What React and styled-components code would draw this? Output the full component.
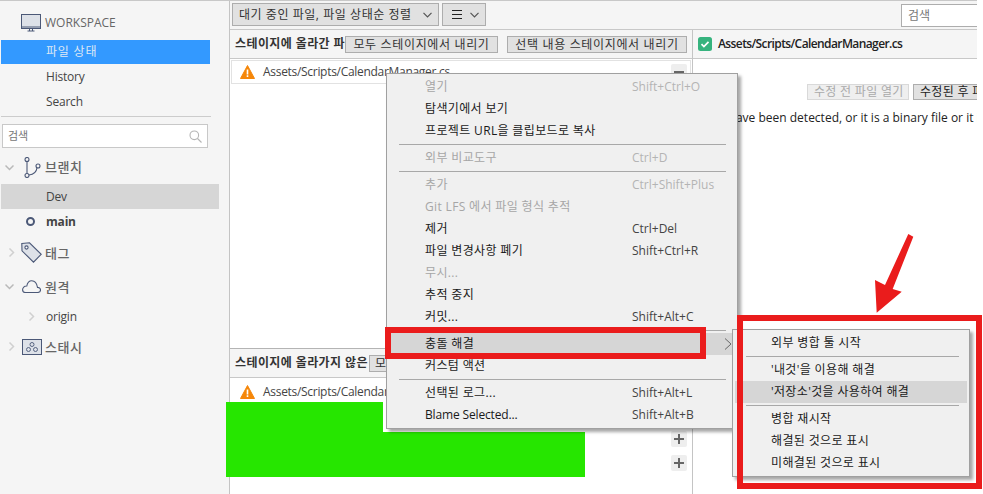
import React from 'react';
import styled, { createGlobalStyle } from 'styled-components';

const Global = createGlobalStyle`
  html, body { margin: 0; padding: 0; background: #fff; overflow: hidden; }
  * { box-sizing: border-box; }
  #root { width: 983px; height: 494px; }
`;
const FONT = `"Open Sans", "Noto Sans CJK KR", sans-serif`;

const Page = styled.div`
  position: relative; width: 983px; height: 494px; overflow: hidden;
  font: 12px/16px ${FONT}; color: #222; background: #fff;
`;
const Window = styled.div`
  display: flex; width: 977px; height: 494px; border-top: 1px solid #c8c8c8;
`;
const Sidebar = styled.aside`
  width: 230px; flex: none; background: #f5f5f5; border-right: 1px solid #c4c4c4;
  padding: 9px 0 0 1px; display: flex; flex-direction: column;
`;
const GroupHead = styled.div`
  display: flex; align-items: center; height: ${p => p.$h || 25}px;
  margin-top: ${p => p.$mt || 0}px; margin-bottom: ${p => p.$mb || 0}px;
  font-size: ${p => p.$size || 13}px; font-weight: 500; color: #666; gap: ${p => p.$gap || 3}px;
  padding-left: ${p => p.$pl || 3}px; letter-spacing: ${p => p.$ls ?? .6}px;
`;
const Chevron = styled.span`
  width: 14px; flex: none; display: flex; justify-content: flex-start; padding-left: ${p => p.$open ? 1 : 3}px;
`;
const IconSlot = styled.span`
  width: 21px; flex: none; display: flex; justify-content: center; align-items: center;
`;
const NavItem = styled.div`
  height: ${p => p.$h || 25}px; width: ${p => p.$w || 209}px; padding-left: 45px;
  display: flex; align-items: center; font-size: 12px; color: #444; letter-spacing: ${p => p.$ls ?? -.2}px;
  font-weight: ${p => p.$bold ? 700 : 400};
  background: ${p => p.$bg || 'transparent'}; ${p => p.$fg ? `color:${p.$fg};` : ''}
  position: relative;
`;
const NavChevron = styled.span`
  position: absolute; left: 26px; top: 9px; display: flex;
`;
const CurrentDot = styled.span`
  position: absolute; left: 25px; top: 8px; width: 9px; height: 9px; border-radius: 50%;
  border: 2px solid #4b5877;
`;
const Rule = styled.div`
  width: 210px; height: 1px; background: #ccc; margin: 2px 0 7px;
`;
const SideSearch = styled.div`
  width: 206px; height: 24px; margin-left: 1px; background: #fff; border: 1px solid #c8c8c8;
  display: flex; align-items: center; justify-content: space-between; padding: 0 5px 0 5px; color: #777; font-size: 11px;
`;
const Main = styled.main`
  flex: 1; min-width: 0; display: flex; flex-direction: column;
`;
const Toolbar = styled.div`
  height: 29px; flex: none; background: #f5f5f5; border-bottom: 1px solid #c8c8c8;
  display: flex; align-items: flex-start; padding: 2px 0 0 2px; gap: 3px;
`;
const ToolButton = styled.div`
  height: 23px; width: ${p => p.$w}px; flex: none; background: #e1e1e1; border: 1px solid #adadad;
  display: flex; align-items: center; justify-content: space-between; padding: 0 6px 0 ${p => p.$pl || 6}px; color: #333; font-size: 12px; letter-spacing: .55px; white-space: nowrap;
`;
const TopSearch = styled.div`
  margin-left: auto; margin-top: 1px; width: 76px; height: 23px; background: #fff; border: 1px solid #adadad; border-right: 0;
  padding: 0 6px; font-size: 12px; color: #777; display:flex; align-items:center;
`;
const Panes = styled.div`
  flex: 1; min-height: 0; display: flex;
`;
const LeftPane = styled.div`
  width: 463px; flex: none; border-right: 1px solid #c4c4c4; display: flex; flex-direction: column;
`;
const StageBox = styled.section`
  height: ${p => p.$h}px; flex: none; display: flex; flex-direction: column;
  ${p => p.$line ? 'border-top: 1px solid #b4b4b4;' : ''}
`;
const PaneHead = styled.div`
  height: ${p => p.$h || 29}px; flex: none; background: #f5f5f5; border-bottom: 1px solid #c8c8c8; display: flex; align-items: center;
  padding-left: 5px; position: relative; white-space: nowrap; overflow: hidden;
  font-size: 12px; font-weight: 700; color: #333; letter-spacing: .4px;
`;
const HeadPath = styled.span`
  margin-left: 6px; font-weight: 600; letter-spacing: -.6px; color: #222;
`;
const StageButton = styled.div`
  position: absolute; left: ${p => p.$x}px; top: 6px; height: 17px; width: ${p => p.$w}px;
  background: #e1e1e1; border: 1px solid #adadad; font-weight: 400; font-size: 12px; letter-spacing: .65px;
  display: flex; align-items: center; justify-content: ${p => p.$left ? 'flex-start' : 'center'}; padding-left: ${p => p.$left ? 5 : 0}px;
  color: #333; white-space: nowrap; overflow: hidden;
`;
const FileRow = styled.div`
  height: ${p => p.$h || 24}px; margin: 1px 1px 0 1px; flex: none;
  border: 1px solid ${p => p.$border ? '#e2e2e2' : 'transparent'};
  display: flex; align-items: center; gap: 8px; padding-left: 8px; color: #444; position: relative; font-size: 12px; letter-spacing: -.3px;
`;
const MiniButton = styled.div`
  position: absolute; right: 3px; width: 16px; height: 16px; border-radius: 2px; background: #eee;
  display: flex; align-items: center; justify-content: center; top: ${p => p.$top || 3}px;
`;
const PlusList = styled.div`
  display: flex; flex-direction: column; align-items: flex-end; gap: 8px; padding: 0 5px 0 0; margin-top: 26px;
`;
const PlusButton = styled.div`
  width: 16px; height: 16px; border-radius: 2px; background: #eee; display: flex; align-items: center; justify-content: center;
`;
const RightPane = styled.div`
  flex: 1; min-width: 0; display: flex; flex-direction: column; overflow: hidden;
`;
const DiffActions = styled.div`
  display: flex; gap: 4px; padding: 25px 0 0 114px; white-space: nowrap;
`;
const DiffButton = styled.div`
  height: 16px; flex: none; width: ${p => p.$w}px; padding-left: 6px; overflow: hidden;
  background: ${p => p.$off ? '#efefef' : '#e1e1e1'}; border: 1px solid ${p => p.$off ? '#d9d9d9' : '#adadad'};
  color: ${p => p.$off ? '#aaa' : '#222'}; display: flex; align-items: center; letter-spacing: .3px; font-size: 12px;
`;
const DiffMessage = styled.div`
  margin: 10px 0 0 -33px; font-weight: 500; color: #222; white-space: nowrap; font-size: 12px; letter-spacing: 0;
`;
const Menu = styled.div`
  position: absolute; left: ${p => p.$x}px; top: ${p => p.$y}px; width: ${p => p.$w}px;
  background: #f0f0f0; border: 1px solid #a0a0a0; padding: 2px; box-shadow: 3px 3px 3px rgba(0,0,0,.35);
  display: flex; flex-direction: column; z-index: ${p => p.$z};
`;
const MenuItem = styled.div`
  height: 22px; flex: none; display: flex; align-items: center; justify-content: space-between; position: relative;
  padding: 0 ${p => p.$pr || 4}px 0 ${p => p.$pl || 36}px;
  color: ${p => p.$off ? '#a6a6a6' : '#1a1a1a'}; background: ${p => p.$hi ? '#d6d6d6' : 'transparent'};
  letter-spacing: ${p => p.$latin ? -.15 : .35}px; font-size: 12px; white-space: nowrap;
`;
const Shortcut = styled.span`
  width: 99px; flex: none; letter-spacing: 0; color: ${p => p.$off ? '#b4b4b4' : '#444'};
`;
const MenuSep = styled.div`
  height: 1px; margin: 2px ${p => p.$r || 9}px 2px ${p => p.$l || 10}px; flex: none; background: #a8a8a8;
`;
const SubArrow = styled.svg`
  position: absolute; right: 3px; top: 5px;
`;
const Redact = styled.div`
  position: absolute; left: 226px; top: 402px; width: 359px; height: 75px; z-index: 1; background: #26e600;
  clip-path: polygon(0 0, 157px 0, 157px 30px, 100% 30px, 100% 100%, 0 100%);
`;
const RedFrame = styled.div`
  position: absolute; left: ${p => p.$x}px; top: ${p => p.$y}px; width: ${p => p.$w}px; height: ${p => p.$h}px;
  border: ${p => p.$b || 6}px solid #ea1c1c; z-index: 5; pointer-events: none;
`;
const ArrowDrawing = styled.svg`
  position: absolute; left: 870px; top: 230px; z-index: 5;
`;

const I = { s: '#4b5877', f: '#dde1e8' };
const Monitor = () => (
  <svg width="20" height="18" viewBox="0 0 20 18" fill="none" stroke={I.s}>
    <rect x=".5" y=".5" width="19" height="14" fill={I.f} />
    <path d="M.5 13h19M6.500 17h7M8.500 15v2M11.500 15v2" />
  </svg>
);
const Branch = () => (
  <svg width="18" height="21" viewBox="0 0 18 21" fill="none" stroke={I.s} strokeWidth="1.100">
    <circle cx="4" cy="2.500" r="2" /><circle cx="4" cy="18.500" r="2" /><circle cx="15" cy="9" r="2" />
    <path d="M4 4.500v12M6 18c4.500-.5 7.500-3 8-7.200" />
  </svg>
);
const Tag = () => (
  <svg width="21" height="21" viewBox="0 0 21 21" stroke={I.s} strokeWidth="1.100">
    <path d="M.8 1.500l7.700-.7 11.700 11.500-7.700 7.900L1 8.800z" fill={I.f} />
    <circle cx="5.500" cy="5.500" r="1.600" fill="#fff" />
  </svg>
);
const Cloud = () => (
  <svg width="19" height="13" viewBox="0 0 19 13" fill="none" stroke={I.s} strokeWidth="1.100">
    <path d="M3.500 12.500h12c1.800 0 3-1 3-2.500s-1.200-2.700-3-2.600C14.800 3.500 12.500.8 9.800.8 7 .8 5.300 3 4.800 6 2.300 5.800.6 7.700.6 9.700c0 1.800 1.300 2.800 2.900 2.800z" />
  </svg>
);
const Stash = () => (
  <svg width="20" height="16" viewBox="0 0 20 16" fill={I.f} stroke={I.s}>
    <rect x=".5" y=".5" width="19" height="15" />
    <g fill="none" strokeWidth=".9"><circle cx="10" cy="5.500" r="2" /><circle cx="6.500" cy="10.500" r="2" /><circle cx="13.500" cy="10.500" r="2" /></g>
  </svg>
);
const Chev = ({ open, c = '#b9b9b9' }) => (
  <svg width="9" height="9" viewBox="0 0 9 9" fill="none" stroke={c} strokeWidth="1.500">
    {open ? <path d="M.5 2.500l4 4 4-4" /> : <path d="M2.500 .5l4 4-4 4" />}
  </svg>
);
const Magnifier = () => (
  <svg width="13" height="13" viewBox="0 0 13 13" fill="none" stroke="#b5b5b5" strokeWidth="1.100">
    <circle cx="5.300" cy="5.300" r="4.300" /><path d="M8.500 8.500l4 4" />
  </svg>
);
const Warn = () => (
  <svg width="15" height="14" viewBox="0 0 15 14">
    <path d="M7.500 .5l7 13H.5z" fill="#f5870a" stroke="#f5870a" strokeLinejoin="round" />
    <path d="M6.700 4.500h1.600v5H6.700zM6.700 10.300h1.600v1.700H6.700z" fill="#fff" />
  </svg>
);
const Check = () => (
  <svg width="14" height="14" viewBox="0 0 14 14">
    <rect width="14" height="14" rx="2.500" fill="#36b37e" />
    <path d="M3.500 7.200l2.400 2.300 4.600-4.700" fill="none" stroke="#fff" strokeWidth="1.700" />
  </svg>
);
const Plus = () => (
  <svg width="10" height="10" viewBox="0 0 10 10" stroke="#666" strokeWidth="2"><path d="M5 0v10M0 5h10" /></svg>
);
const Minus = () => (
  <svg width="10" height="10" viewBox="0 0 10 10" stroke="#666" strokeWidth="2"><path d="M0 5h10" /></svg>
);
const Hamburger = () => (
  <svg width="12" height="11" viewBox="0 0 12 11" stroke="#222"><path d="M1 1.500h10M1 5.500h10M1 9.500h10" /></svg>
);
const Caret = () => (
  <svg width="9" height="6" viewBox="0 0 9 6" fill="none" stroke="#555" strokeWidth="1.200"><path d="M.5.8l4 4 4-4" /></svg>
);

const mainMenu = [
  ['열기', 'Shift+Ctrl+O', true], ['탐색기에서 보기'], ['프로젝트 URL을 클립보드로 복사'], 'sep',
  ['외부 비교도구', 'Ctrl+D', true], 'sep',
  ['추가', 'Ctrl+Shift+Plus', true], ['Git LFS 에서 파일 형식 추적', '', true], ['제거', 'Ctrl+Del'],
  ['파일 변경사항 폐기', 'Shift+Ctrl+R'], ['무시...', '', true], ['추적 중지'], ['커밋...', 'Shift+Alt+C'], 'sep',
  ['충돌 해결', '', false, true], ['커스텀 액션'], 'sep',
  ['선택된 로그...', 'Shift+Alt+L'], ['Blame Selected...', 'Shift+Alt+B', false, false, true],
];
const subMenu = [
  ['외부 병합 툴 시작'], 'sep', ["'내것'을 이용해 해결"], ["'저장소'것을 사용하여 해결", '', false, true], 'sep',
  ['병합 재시작'], ['해결된 것으로 표시'], ['미해결된 것으로 표시'],
];

export default function App() {
  return (
    <Page>
      <Global />
      <Window>
        <Sidebar>
          <GroupHead $size={12} $pl={20} $ls={0} $gap={4} $mb={5}><Monitor /><span>WORKSPACE</span></GroupHead>
          <NavItem $bg="#3399ff" $fg="#dfe8f5" $h={24} $ls={.8}>파일 상태</NavItem>
          <NavItem>History</NavItem>
          <NavItem>Search</NavItem>
          <Rule />
          <SideSearch>검색<Magnifier /></SideSearch>
          <GroupHead $mt={6} $h={26} $mb={4}><Chevron $open><Chev open /></Chevron><IconSlot><Branch /></IconSlot><span>브랜치</span></GroupHead>
          <NavItem $bg="#d6d6d6" $w={218}>Dev</NavItem>
          <NavItem $bold><CurrentDot />main</NavItem>
          <GroupHead $mt={5} $h={27}><Chevron><Chev c="#d0d0d0" /></Chevron><IconSlot><Tag /></IconSlot><span>태그</span></GroupHead>
          <GroupHead $mt={7} $h={27} $mb={3}><Chevron $open><Chev open /></Chevron><IconSlot><Cloud /></IconSlot><span>원격</span></GroupHead>
          <NavItem $h={28}><NavChevron><Chev c="#d0d0d0" /></NavChevron>origin</NavItem>
          <GroupHead $h={31}><Chevron><Chev c="#d0d0d0" /></Chevron><IconSlot><Stash /></IconSlot><span>스태시</span></GroupHead>
        </Sidebar>
        <Main>
          <Toolbar>
            <ToolButton $w={207}>대기 중인 파일, 파일 상태순 정렬<Caret /></ToolButton>
            <ToolButton $w={44} $pl={8}><Hamburger /><Caret /></ToolButton>
            <TopSearch>검색</TopSearch>
          </Toolbar>
          <Panes>
            <LeftPane>
              <StageBox $h={318}>
                <PaneHead>스테이지에 올라간 파일
                  <StageButton $x={115} $w={153}>모두 스테이지에서 내리기</StageButton>
                  <StageButton $x={277} $w={180}>선택 내용 스테이지에서 내리기</StageButton>
                </PaneHead>
                <FileRow $border><Warn />Assets/Scripts/CalendarManager.cs
                  <MiniButton><Minus /></MiniButton>
                </FileRow>
              </StageBox>
              <StageBox $h={146} $line>
                <PaneHead>스테이지에 올라가지 않은 파일
                  <StageButton $x={139} $w={120} $left>모두 스테이지에 올리기</StageButton>
                </PaneHead>
                <FileRow $border={false} $h={26}><Warn />Assets/Scripts/CalendarManager.cs</FileRow>
                <PlusList><PlusButton><Plus /></PlusButton><PlusButton><Plus /></PlusButton></PlusList>
              </StageBox>
            </LeftPane>
            <RightPane>
              <PaneHead><Check /><HeadPath>Assets/Scripts/CalendarManager.cs</HeadPath></PaneHead>
              <DiffActions>
                <DiffButton $off $w={102}>수정 전 파일 열기</DiffButton>
                <DiffButton $w={90}>수정된 후 파일 열기</DiffButton>
              </DiffActions>
              <DiffMessage>No changes have been detected, or it is a binary file or it is too large to display.</DiffMessage>
            </RightPane>
          </Panes>
        </Main>
      </Window>
      <Redact />
      <Menu $x={386} $y={73} $w={352} $z={2}>
        {mainMenu.map((m, i) => m === 'sep' ? <MenuSep key={i} /> : (
          <MenuItem key={i} $off={m[2]} $hi={m[3]} $latin={m[4]}>
            {m[0]}{m[1] ? <Shortcut $off={m[2]}>{m[1]}</Shortcut> : null}
            {m[3] ? <SubArrow width="8" height="12" viewBox="0 0 8 12" fill="none" stroke="#666"><path d="M1 .5l6 5.500-6 5.500" /></SubArrow> : null}
          </MenuItem>
        ))}
      </Menu>
      <Menu $x={732} $y={329} $w={238} $z={3}>
        {subMenu.map((m, i) => m === 'sep' ? <MenuSep key={i} $l={11} $r={8} /> : (
          <MenuItem key={i} $hi={m[3]} $off={m[2]} $pl={36}>{m[0]}</MenuItem>
        ))}
      </Menu>
      <RedFrame $x={385} $y={327} $w={321} $h={32} />
      <RedFrame $x={737} $y={315} $w={245} $h={174} />
      <ArrowDrawing width="46" height="88" viewBox="0 0 46 88" fill="#ea1c1c">
        <path d="M38.300 4L43.300 6.700 22.700 59 31.700 61.700 6.700 82.700 5 50 15 55z" />
      </ArrowDrawing>
    </Page>
  );
}
